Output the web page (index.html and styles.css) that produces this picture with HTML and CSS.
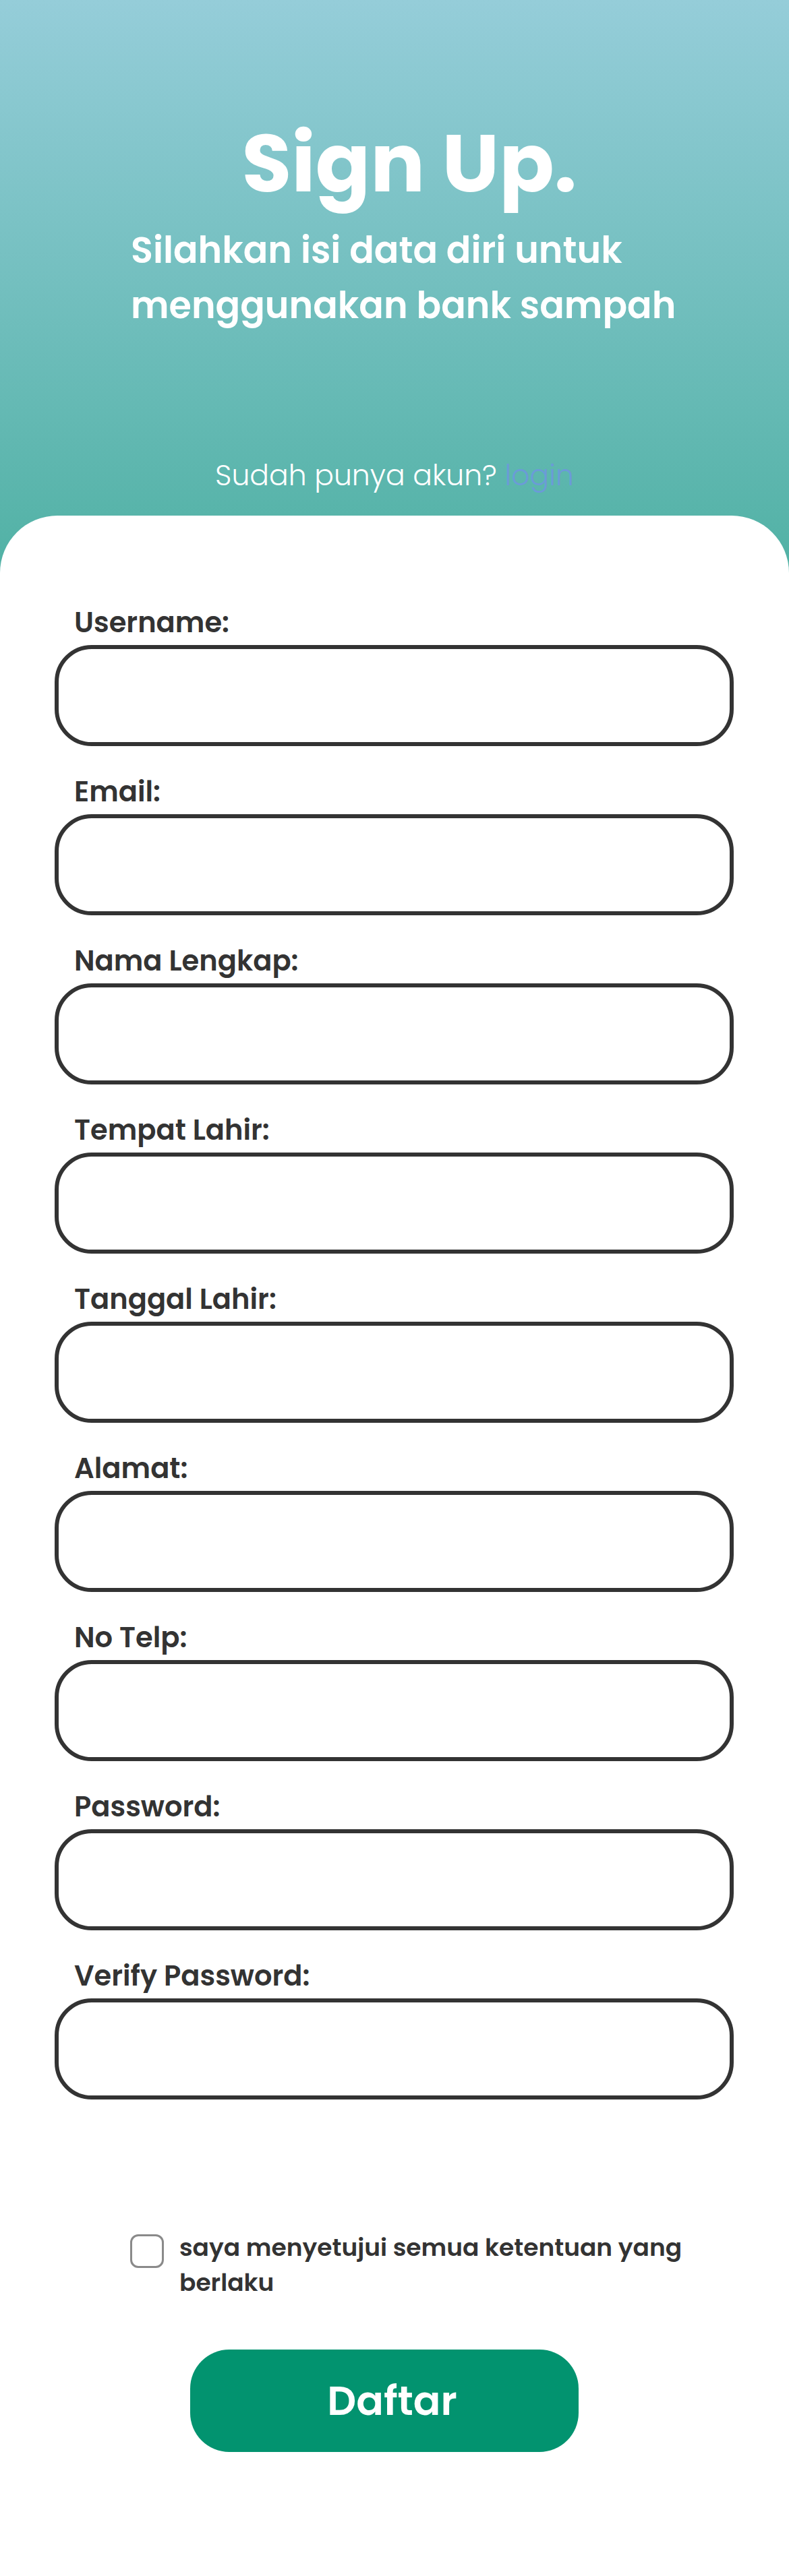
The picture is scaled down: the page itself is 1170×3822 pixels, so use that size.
FILE: index.html
```html
<!DOCTYPE html>
<html lang="id">
<head>
<meta charset="utf-8">
<title>Sign Up</title>
<link rel="stylesheet" href="styles.css">
</head>
<body>
<div class="page">
  <header class="hero">
    <div class="hero-inner">
      <h1 class="title">Sign Up.</h1>
      <p class="subtitle">Silahkan isi data diri untuk<br>menggunakan bank sampah</p>
    </div>
    <p class="have-account">Sudah punya akun? <a class="login-link" href="#">login</a></p>
  </header>
  <main class="card">
    <form class="form">
      <div class="field"><label class="label">Username:</label><input class="input" type="text"></div>
      <div class="field"><label class="label">Email:</label><input class="input" type="text"></div>
      <div class="field"><label class="label">Nama Lengkap:</label><input class="input" type="text"></div>
      <div class="field"><label class="label">Tempat Lahir:</label><input class="input" type="text"></div>
      <div class="field"><label class="label">Tanggal Lahir:</label><input class="input" type="text"></div>
      <div class="field"><label class="label">Alamat:</label><input class="input" type="text"></div>
      <div class="field"><label class="label">No Telp:</label><input class="input" type="text"></div>
      <div class="field"><label class="label">Password:</label><input class="input" type="password"></div>
      <div class="field"><label class="label">Verify Password:</label><input class="input" type="password"></div>
      <div class="agree">
        <input class="check" type="checkbox">
        <span class="agree-text">saya menyetujui semua ketentuan yang berlaku</span>
      </div>
      <div class="submit-row">
        <button class="submit" type="button">Daftar</button>
      </div>
    </form>
  </main>
</div>
</body>
</html>
```
FILE: styles.css
```css
* { box-sizing: border-box; }
html, body { margin: 0; padding: 0; }
body {
  width: 1170px;
  font-family: "Poppins", "Open Sans", "Noto Sans", sans-serif;
  background: #ffffff;
}
.page {
  min-height: 3822px;
  display: flex;
  flex-direction: column;
  background: linear-gradient(to bottom, #95cdd9 0px, #50b1a4 860px) no-repeat;
  background-size: 100% 860px;
}
.hero {
  padding-top: 182px;
  display: flex;
  flex-direction: column;
}
.hero-inner {
  margin-left: 194px;
  width: 826px;
}
.title {
  margin: 0;
  font-size: 120px;
  line-height: 120px;
  font-weight: 700;
  color: #ffffff;
  text-align: center;
}
.subtitle {
  margin: 28px 0 0;
  font-size: 54px;
  line-height: 82px;
  font-weight: 600;
  color: #ffffff;
}
.have-account {
  margin: 181px 0 0;
  font-size: 42.5px;
  line-height: 60px;
  font-weight: 300;
  color: #ffffff;
  text-align: center;
}
.login-link {
  color: #6b9bd8;
  text-decoration: none;
}
.card {
  margin-top: 30px;
  flex: 1;
  background: #ffffff;
  border-radius: 85px 85px 0 0;
  padding: 134px 82px 184px 81px;
}
.form {
  display: flex;
  flex-direction: column;
}
.field {
  display: flex;
  flex-direction: column;
  margin-bottom: 43px;
}
.field:nth-child(9) { margin-bottom: 0; }
.label {
  padding-left: 29px;
  font-size: 41.6px;
  line-height: 50px;
  font-weight: 600;
  color: #333333;
  margin-bottom: 8px;
}
.input {
  width: 100%;
  height: 150px;
  border: 6px solid #333333;
  border-radius: 55px;
  background: #ffffff;
  outline: none;
  padding: 0 40px;
  font-size: 40px;
}
.agree {
  margin-top: 194px;
  margin-left: 112px;
  display: flex;
  align-items: flex-start;
  gap: 23px;
}
.check {
  appearance: none;
  -webkit-appearance: none;
  margin: 6px 0 0;
  width: 50px;
  height: 50px;
  flex: none;
  border: 3px solid #8a8a8a;
  border-radius: 12px;
  background: #ffffff;
}
.agree-text {
  width: 790px;
  font-size: 36px;
  line-height: 52px;
  font-weight: 600;
  color: #333333;
}
.submit-row {
  margin-top: 73px;
  display: flex;
  justify-content: center;
  padding-right: 30px;
}
.submit {
  width: 576px;
  height: 152px;
  border: none;
  border-radius: 58px;
  background: #02936f;
  color: #ffffff;
  font-family: "Poppins", "Open Sans", "Noto Sans", sans-serif;
  font-size: 60px;
  font-weight: 600;
  padding: 0 0 0 24px;
}
```
